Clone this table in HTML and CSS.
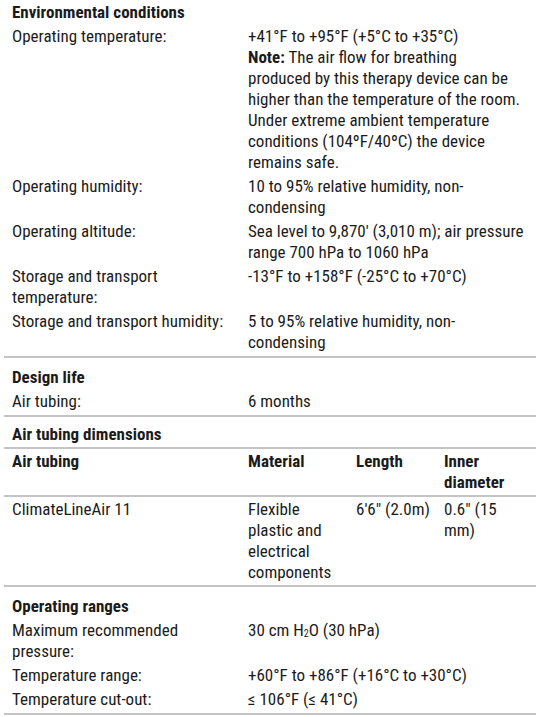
FILE: index.html
```html
<!DOCTYPE html>
<html lang="en">
<head>
<meta charset="utf-8">
<title>Specifications</title>
<link rel="stylesheet" href="styles.css">
</head>
<body>
<div class="page">
  <section class="sec first">
    <div class="head">Environmental conditions</div>
    <div class="row"><div class="k">Operating temperature:</div><div class="v">+41°F to +95°F (+5°C to +35°C)<br><b>Note:</b> The air flow for breathing<br>produced by this therapy device can be higher than the temperature of the room. Under extreme ambient temperature conditions (104ºF/40ºC) the device remains safe.</div></div>
    <div class="row"><div class="k">Operating humidity:</div><div class="v">10 to 95% relative humidity, non-condensing</div></div>
    <div class="row"><div class="k">Operating altitude:</div><div class="v">Sea level to 9,870' (3,010 m); air pressure range 700 hPa to 1060 hPa</div></div>
    <div class="row"><div class="k">Storage and transport temperature:</div><div class="v">-13°F to +158°F (-25°C to +70°C)</div></div>
    <div class="row"><div class="k">Storage and transport humidity:</div><div class="v">5 to 95% relative humidity, non-condensing</div></div>
  </section>
  <section class="sec">
    <div class="head">Design life</div>
    <div class="row"><div class="k">Air tubing:</div><div class="v">6 months</div></div>
  </section>
  <section class="sec solo">
    <div class="head">Air tubing dimensions</div>
  </section>
  <section class="sec tsec">
    <div class="trow th"><div>Air tubing</div><div>Material</div><div>Length</div><div>Inner diameter</div></div>
  </section>
  <section class="sec tsec">
    <div class="trow"><div>ClimateLineAir 11</div><div>Flexible plastic and electrical components</div><div>6'6" (2.0m)</div><div>0.6" (15 mm)</div></div>
  </section>
  <section class="sec">
    <div class="head">Operating ranges</div>
    <div class="row"><div class="k">Maximum recommended pressure:</div><div class="v">30 cm H<sub>2</sub>O (30 hPa)</div></div>
    <div class="row"><div class="k">Temperature range:</div><div class="v">+60°F to +86°F (+16°C to +30°C)</div></div>
    <div class="row"><div class="k">Temperature cut-out:</div><div class="v">≤ 106°F (≤ 41°C)</div></div>
  </section>
</div>
</body>
</html>
```
FILE: styles.css
```css
html, body {
  margin: 0;
  padding: 0;
  background: #ffffff;
}
body {
  font-family: Roboto, "Liberation Sans", sans-serif;
  font-stretch: 75%;
  font-size: 17px;
  line-height: 21px;
  color: #1b1b1b;
}
.page {
  width: 532px;
  padding: 0 4px;
}
.sec {
  border-bottom: 2px solid #c4c4c4;
  padding: 9px 0 1px 0;
}
.sec.first {
  padding-top: 1.5px;
}
.sec.solo {
  padding: 7px 0 0 0;
}
.head {
  font-weight: bold;
  padding: 0 8px 2px 8px;
}
.row {
  display: grid;
  grid-template-columns: 236px 1fr;
  padding: 1.5px 8px 1.5px 8px;
}
.row .k {
  padding-right: 12px;
}
.v b {
  font-weight: bold;
}
sub {
  font-size: 10px;
  line-height: 0;
  vertical-align: -1px;
}
.tsec {
  padding: 0;
}
.trow {
  display: grid;
  grid-template-columns: 236px 108px 88px 1fr;
  padding: 2px 8px 2px 8px;
}
.trow > div {
  padding-right: 6px;
}
.trow > div:nth-child(2) {
  padding-right: 14px;
}
.th {
  font-weight: bold;
}
```
